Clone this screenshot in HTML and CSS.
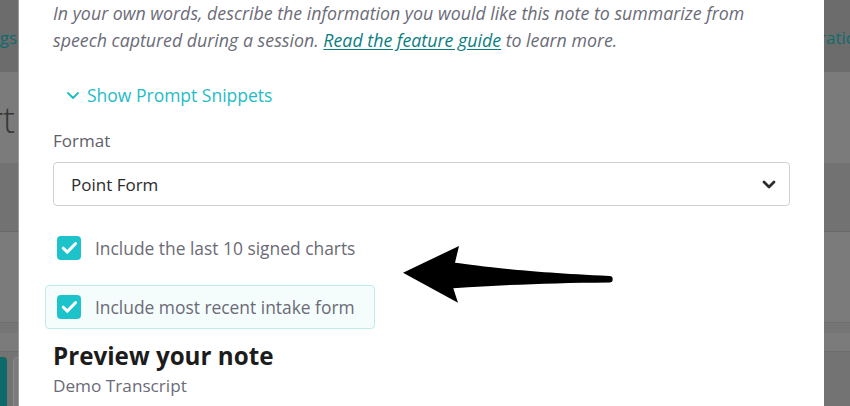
FILE: index.html
```html
<!DOCTYPE html>
<html lang="en">
<head>
<meta charset="utf-8">
<title>Note settings</title>
<link rel="stylesheet" href="styles.css">
</head>
<body>
<div class="page">
  <div class="nav">
    <div class="clip clip-nav"><span class="nav-link">Settings</span></div>
    <span class="nav-link nav-right">Integrations</span>
  </div>
  <div class="title-row">
    <div class="clip clip-title"><span class="title">Chart</span></div>
  </div>
  <div class="band band-a"></div>
  <div class="band band-b"></div>
  <div class="band band-c"></div>
  <div class="band band-d"></div>
  <div class="band band-e">
    <div class="clip clip-btn"><span class="bg-btn"></span></div>
    <span class="bg-btn-outline"></span>
  </div>
</div>

<div class="modal">
  <div class="modal-body">
    <p class="desc">In your own words, describe the information you would like this note to summarize from speech captured during a session. <a class="guide" href="#">Read the feature guide</a> to learn more.</p>

    <div class="snippets">
      <svg class="snip-chev" width="12" height="7" viewBox="0 0 12 7"><path d="M1 1l5 5 5-5" fill="none" stroke="currentColor" stroke-width="1.8" stroke-linecap="round" stroke-linejoin="round"/></svg>
      <span>Show Prompt Snippets</span>
    </div>

    <div class="field-label">Format</div>
    <div class="select">
      <span>Point Form</span>
      <svg class="sel-chev" width="14" height="9" viewBox="0 0 14 9"><path d="M2 2l5 5 5-5" fill="none" stroke="currentColor" stroke-width="2.8" stroke-linecap="round" stroke-linejoin="round"/></svg>
    </div>

    <div class="check-row">
      <span class="box"><svg width="17" height="14" viewBox="0 0 17 14"><path d="M2.3 7.2l4 3.9 8.3-8.6" fill="none" stroke="#fff" stroke-width="3" stroke-linecap="round" stroke-linejoin="round"/></svg></span>
      <span class="check-label">Include the last 10 signed charts</span>
    </div>
    <div class="check-row active">
      <span class="box"><svg width="17" height="14" viewBox="0 0 17 14"><path d="M2.3 7.2l4 3.9 8.3-8.6" fill="none" stroke="#fff" stroke-width="3" stroke-linecap="round" stroke-linejoin="round"/></svg></span>
      <span class="check-label">Include most recent intake form</span>
    </div>

    <h2 class="preview">Preview your note</h2>
    <div class="sub">Demo Transcript</div>
  </div>
</div>

<svg class="arrow" width="216" height="62" viewBox="0 0 216 62">
  <path d="M3 28.7 L59 2 L55 18.7 C78 21.5 115 27.5 209.5 32 A3.2 3.2 0 0 1 209.5 38.4 C150 39 108 40.5 53.3 44.3 L58 58.7 Z" fill="#000"/>
</svg>
</body>
</html>
```

FILE: styles.css
```css
* { box-sizing: border-box; }

html, body {
  margin: 0;
  padding: 0;
  width: 850px;
  height: 406px;
  overflow: hidden;
  font-family: "Open Sans", "Noto Sans", sans-serif;
}

body { position: relative; background: #7b7b7b; }

/* background page (dimmed by overlay) */
.page {
  display: flex;
  flex-direction: column;
  width: 850px;
  height: 406px;
}

.nav {
  height: 72px;
  flex: none;
  background: #6c6c6c;
  display: flex;
  align-items: center;
  padding-top: 2px;
}

.clip {
  display: flex;
  justify-content: flex-end;
  overflow: hidden;
  flex: none;
}

.clip-nav { width: 17px; }

.nav-link {
  font-size: 17px;
  color: #0f6b6c;
  white-space: nowrap;
}

.nav-right { margin-left: 762px; }

.title-row {
  height: 91px;
  flex: none;
  background: #7b7b7b;
  display: flex;
  align-items: center;
  padding-top: 4px;
}

.clip-title { width: 15px; }

.title {
  font-size: 36px;
  font-weight: 300;
  color: #363636;
  white-space: nowrap;
}

.band { flex: none; }
.band-a { height: 69px; background: #727272; border-bottom: 1px solid #686868; }
.band-b { height: 91px; background: #7b7b7b; border-bottom: 1px solid #6f6f6f; }
.band-c { height: 10px; background: #757575; }
.band-d { height: 19px; background: #7b7b7b; border-bottom: 1px solid #6b6b6b; }
.band-e {
  flex: 1;
  background: #737373;
  display: flex;
  align-items: flex-start;
  padding-top: 5px;
  gap: 6px;
}

.clip-btn { width: 7px; }
.bg-btn {
  flex: none;
  width: 60px;
  height: 60px;
  background: #0d6a68;
  border-radius: 4px;
}
.bg-btn-outline {
  width: 40px;
  height: 60px;
  border: 1px solid #8a8a8a;
  border-radius: 4px;
  background: #7b7b7b;
}

/* modal */
.modal {
  position: absolute;
  left: 19px;
  top: 0;
  width: 805px;
  height: 406px;
  background: #fff;
  box-shadow: -1px 0 0 #9a9a9a;
}

.modal-body {
  display: flex;
  flex-direction: column;
  align-items: flex-start;
  padding: 0 34px;
}

.desc {
  margin: 0;
  font-size: 17.8px;
  line-height: 27px;
  font-style: italic;
  color: #6b6c78;
}

.guide {
  color: #0b7e7f;
  text-decoration: underline;
  text-underline-offset: 2px;
}

.snippets {
  margin-top: 29px;
  padding-left: 14px;
  height: 24px;
  display: flex;
  align-items: center;
  gap: 8px;
  font-size: 17.5px;
  color: #1fbcc6;
}

.snip-chev { flex: none; margin-top: 1px; }

.field-label {
  margin-top: 23px;
  font-size: 17px;
  line-height: 22px;
  color: #5f5f6b;
}

.select {
  margin-top: 10px;
  width: 100%;
  height: 44px;
  border: 1px solid #d0d0d0;
  border-radius: 4px;
  display: flex;
  align-items: center;
  justify-content: space-between;
  padding: 0 13px 0 17px;
  font-size: 17px;
  color: #2b2b2b;
}

.sel-chev { color: #2e2e2e; }

.check-row {
  margin-left: -8px;
  height: 44px;
  display: flex;
  align-items: center;
  gap: 14px;
  padding: 0 19px 0 11px;
  border: 1px solid transparent;
  border-radius: 4px;
  font-size: 17.4px;
  color: #6b6b76;
}

.check-row:not(.active) { margin-top: 20px; }
.check-row.active {
  margin-top: 15px;
  background: #f4fcfc;
  border-color: #bfeaec;
}

.box {
  flex: none;
  width: 24px;
  height: 24px;
  border-radius: 4px;
  background: #1cc3cb;
  display: flex;
  align-items: center;
  justify-content: center;
}

.check-label { white-space: nowrap; }

.preview {
  margin: 12px 0 0;
  font-size: 24.2px;
  line-height: 30px;
  font-weight: 700;
  color: #1c1c1c;
}

.sub {
  margin-top: 4px;
  font-size: 17.2px;
  line-height: 22px;
  color: #6b6b78;
}

/* annotation arrow drawn over the modal */
.arrow {
  position: absolute;
  left: 400px;
  top: 244px;
}
```
